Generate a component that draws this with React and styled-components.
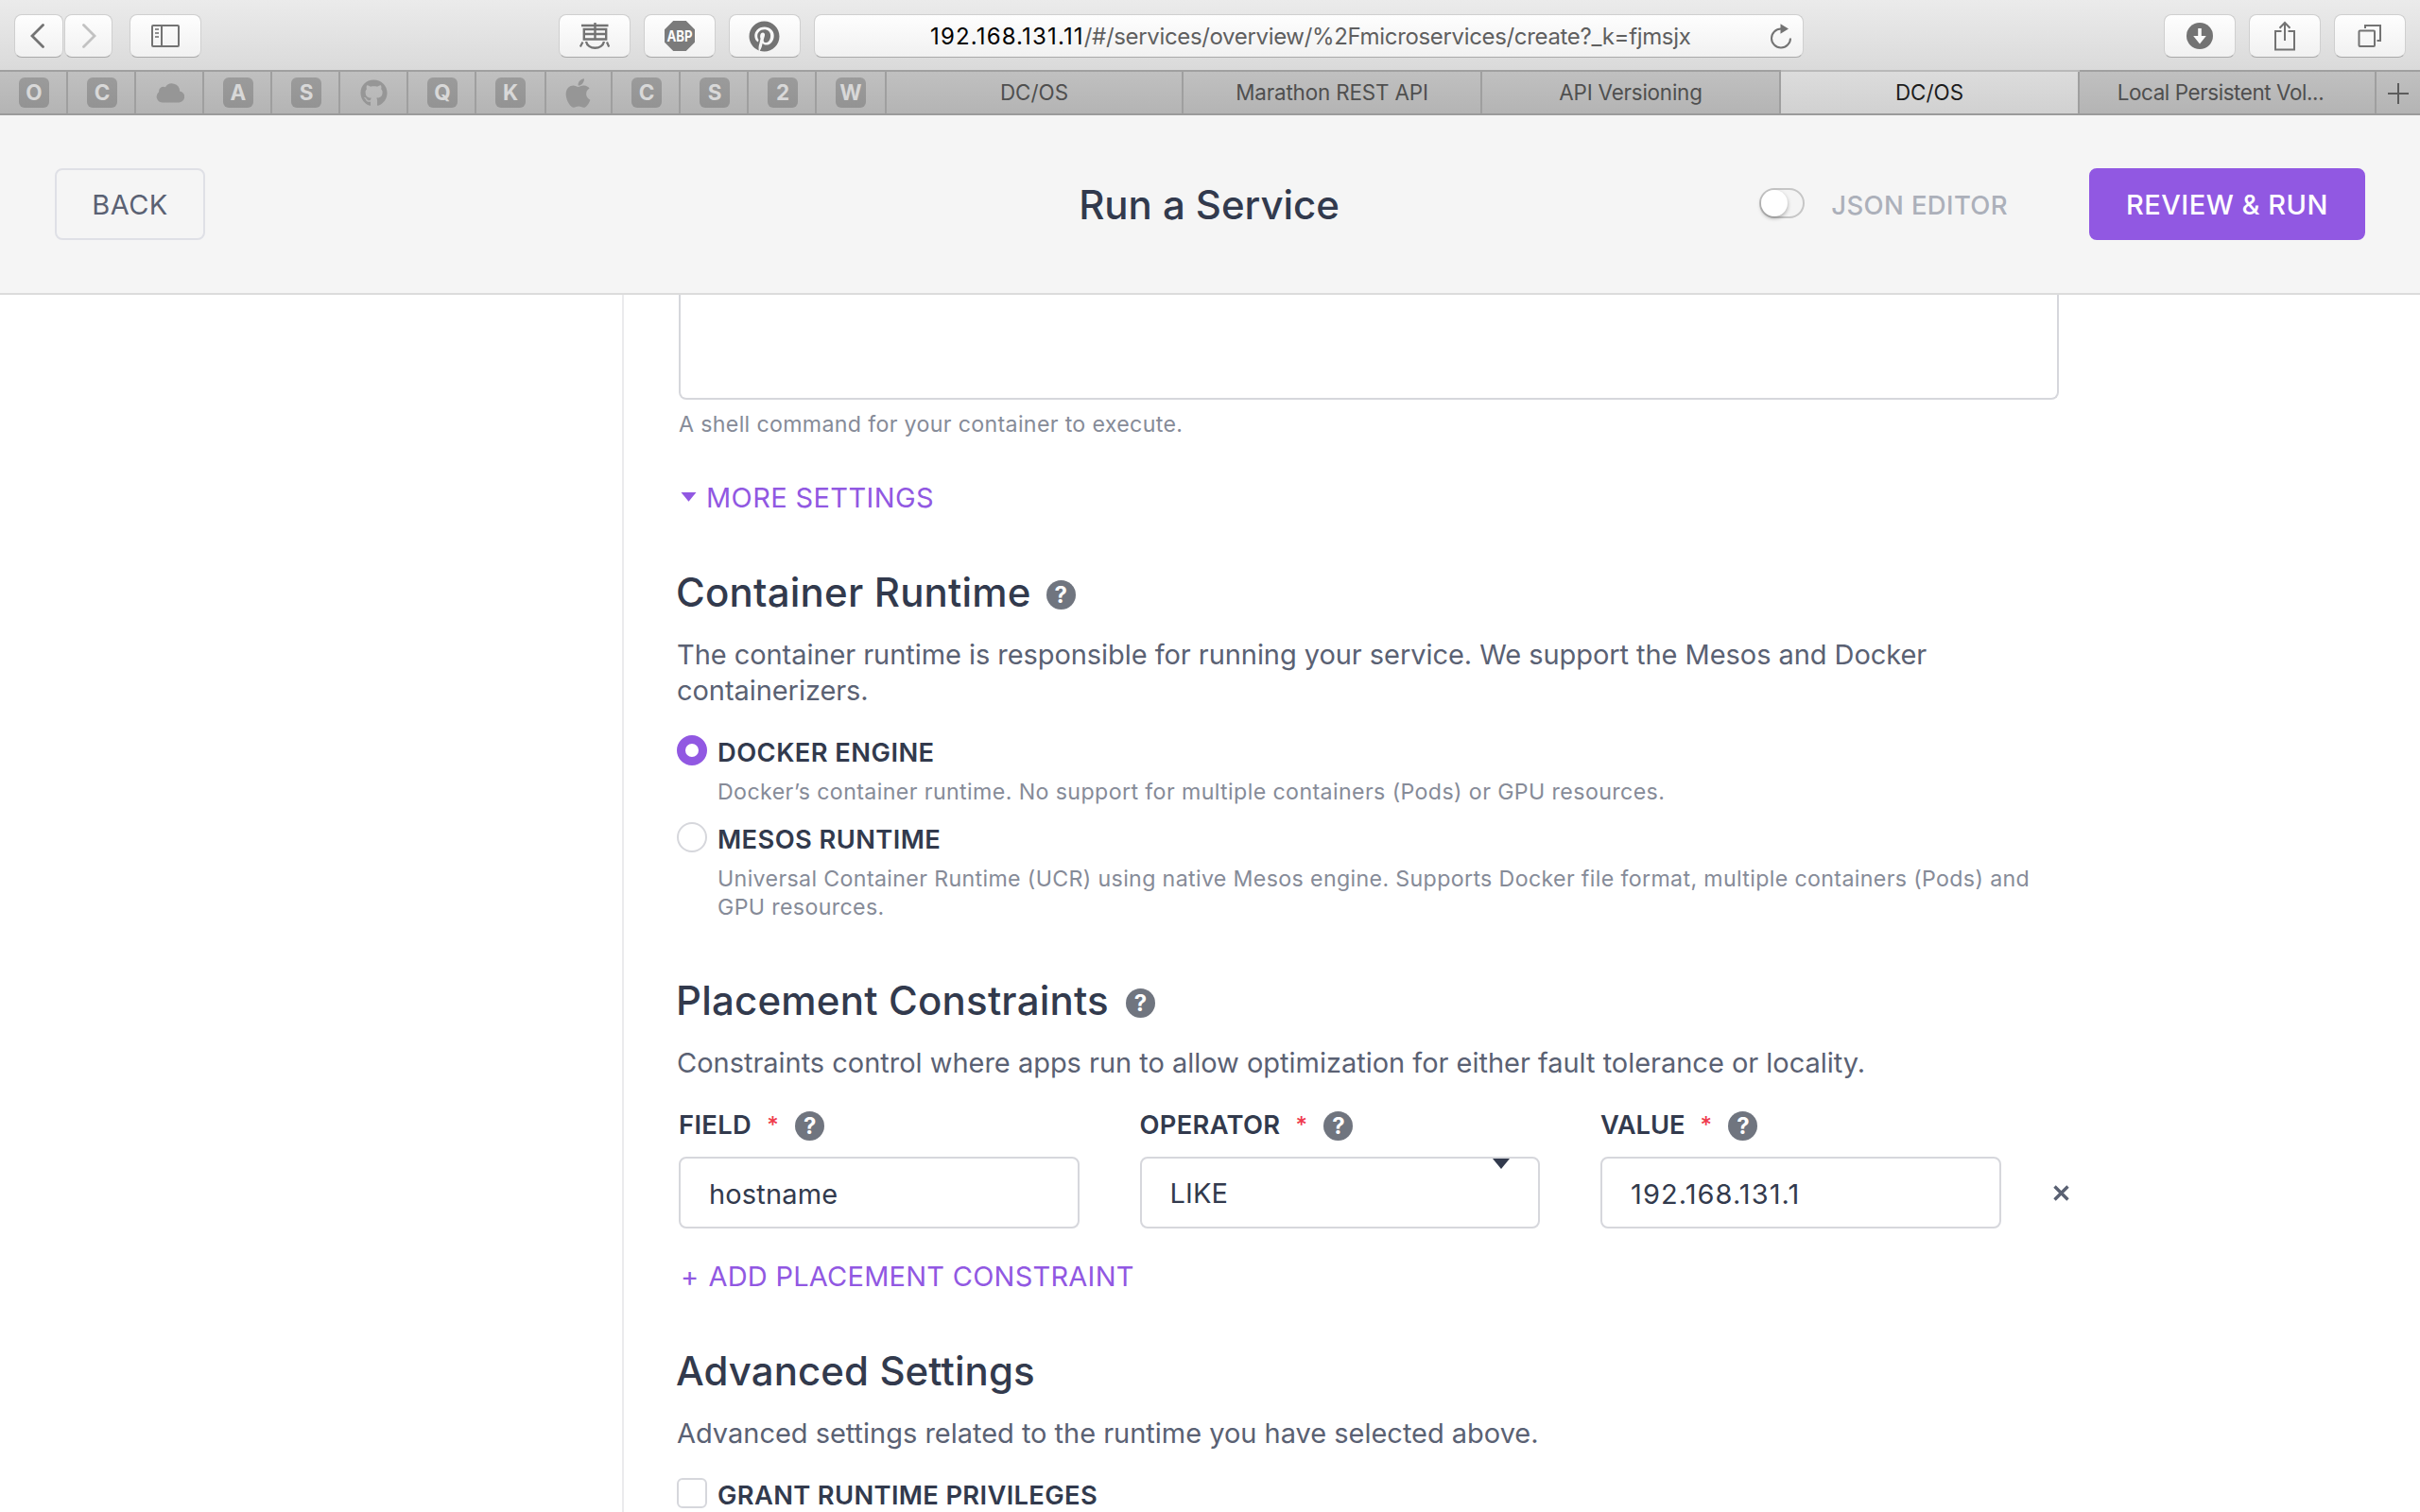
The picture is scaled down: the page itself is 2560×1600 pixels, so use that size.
import React from "react";
import styled, { createGlobalStyle } from "styled-components";
import { FaApple, FaGithub, FaPinterest } from "react-icons/fa";

const color = {
  ink: "#323a4d",
  body: "#5a6173",
  muted: "#868b98",
  purple: "#9158e2",
  border: "#d6d7dc",
  icon: "#737373",
  danger: "#ef3a4c",
};

const GlobalStyle = createGlobalStyle`
  * { box-sizing: border-box; }
  body {
    margin: 0;
    background: #fff;
    font-family: Inter, "Liberation Sans", sans-serif;
    overflow: hidden;
  }
`;

const Window = styled.div`
  display: flex;
  flex-direction: column;
  width: 2560px;
  height: 1600px;
  overflow: hidden;
`;

/* ---------- Browser toolbar ---------- */

const Toolbar = styled.div`
  flex: none;
  display: flex;
  align-items: flex-start;
  height: 74px;
  padding: 15px 15px 0;
  background: linear-gradient(#ebebeb, #dadada);
`;

const ToolGroup = styled.div`
  display: flex;
  gap: ${(p) => p.$gap}px;
  margin-right: ${(p) => p.$after || 0}px;
`;

const ToolButton = styled.div`
  display: flex;
  align-items: center;
  justify-content: center;
  width: ${(p) => p.$width || 76}px;
  height: 46px;
  padding-right: ${(p) => p.$nudge || 0}px;
  border: 1px solid #cfcfcf;
  border-bottom-color: #a9a9a9;
  border-radius: 8px;
  background: linear-gradient(#fefefe, #f1f1f1);
  color: ${color.icon};
`;

const AddressBar = styled.div`
  display: flex;
  align-items: center;
  width: 1048px;
  height: 46px;
  margin-right: 381px;
  padding: 2px 11px 0 122px;
  border: 1px solid #cfcfcf;
  border-bottom-color: #a9a9a9;
  border-radius: 8px;
  background: linear-gradient(#fefefe, #f1f1f1);
  color: ${color.icon};
  font-size: 24px;
  line-height: 30px;
  white-space: pre;
`;

const Host = styled.span`
  color: #000;
  letter-spacing: 1.15px;
`;

const Path = styled.span`
  flex: 1;
  color: #5f5f5f;
  letter-spacing: -0.34px;
`;

const AbpWord = styled.span`
  position: absolute;
  inset: 0;
  display: flex;
  align-items: center;
  justify-content: center;
  color: #fbfbfb;
  font-size: 16.5px;
  font-weight: 700;
  transform: scaleX(0.8);
`;

const AbpBadge = styled.span`
  position: relative;
  width: 32px;
  height: 32px;
  background: #7b7b7b;
  clip-path: polygon(29% 0, 71% 0, 100% 29%, 100% 71%, 71% 100%, 29% 100%, 0 71%, 0 29%);
`;

/* ---------- Tab strip ---------- */

const TabStrip = styled.div`
  flex: none;
  display: flex;
  height: 48px;
  border-top: 2px solid #a0a0a0;
  border-bottom: 2px solid #9b9b9b;
  background: linear-gradient(#c0c0c0, #b4b4b4);
`;

const PinnedTab = styled.div`
  display: flex;
  align-items: center;
  width: ${(p) => p.$width || 72}px;
  padding-left: ${(p) => p.$inset || 20}px;
  border-right: 2px solid #9f9f9f;
  color: #969696;
`;

const Monogram = styled.span`
  display: flex;
  align-items: center;
  justify-content: center;
  width: 32px;
  height: 32px;
  border-radius: 6px;
  background: linear-gradient(#9b9b9b, #939393);
  color: #d8d8d8;
  font-size: 22.5px;
  font-weight: 700;
  line-height: 32px;
`;

const Tab = styled.div`
  display: flex;
  align-items: center;
  justify-content: center;
  width: ${(p) => p.$width || 316}px;
  padding-right: ${(p) => p.$tail || 0}px;
  border-right: 2px solid #9f9f9f;
  background: ${(p) => (p.$active ? "linear-gradient(#dcdcdc, #d1d1d1)" : "none")};
  box-shadow: ${(p) => (p.$active ? "0 -2px 0 #b9b9b9" : "none")};
  color: ${(p) => (p.$active ? "#1c1c1c" : "#4f4f4f")};
  font-size: 22.4px;
  line-height: 28px;
  letter-spacing: ${(p) => p.$track || 0}px;
  white-space: nowrap;
`;

const NewTab = styled.div`
  flex: 1;
  display: flex;
  align-items: center;
  justify-content: center;
  padding-top: 2px;
`;

/* ---------- Page header ---------- */

const PageHeader = styled.header`
  flex: none;
  display: grid;
  grid-template-columns: 1fr auto 1fr;
  align-items: center;
  height: 190px;
  padding: 0 58px;
  border-bottom: 2px solid #dcdcdc;
  background: #f5f5f5;
`;

const Button = styled.button`
  width: ${(p) => p.$width}px;
  height: 76px;
  padding: 2px 0 0;
  border: 2px solid ${(p) => (p.$primary ? color.purple : "#dfe0e6")};
  border-radius: 8px;
  background: ${(p) => (p.$primary ? color.purple : "transparent")};
  color: ${(p) => (p.$primary ? "#fff" : color.body)};
  font: ${(p) => (p.$primary ? 500 : 400)} 29px/38px Inter, sans-serif;
  letter-spacing: 0.5px;
`;

const PageTitle = styled.h1`
  margin: 0;
  padding: 2px 2px 0 0;
  color: ${color.ink};
  font-size: 42px;
  font-weight: 500;
  line-height: 50px;
  letter-spacing: -0.05px;
`;

const HeaderActions = styled.div`
  display: flex;
  align-items: center;
  justify-content: flex-end;
`;

const Toggle = styled.span`
  width: 48px;
  height: 32px;
  margin: 0 28px 2px 0;
  border: 2px solid #c6c6c6;
  border-radius: 16px;
  background: #f4f4f4;

  &::before {
    content: "";
    display: block;
    width: 28px;
    height: 28px;
    border-radius: 50%;
    background: #fff;
    box-shadow: 0 2px 4px rgba(0, 0, 0, 0.3);
  }
`;

const ToggleLabel = styled.span`
  margin: 2px 86px 0 0;
  color: #acb0ba;
  font-size: 27.5px;
  font-weight: 500;
  line-height: 34px;
  letter-spacing: 0.36px;
`;

/* ---------- Form ---------- */

const Main = styled.main`
  flex: 1;
  display: flex;
  min-height: 0;
  overflow: hidden;
`;

const Sidebar = styled.aside`
  flex: none;
  width: 660px;
  border-right: 2px solid #ebebed;
`;

const Form = styled.section`
  width: 1518px;
  padding-left: 56px;
`;

const CommandArea = styled.div`
  height: 111px;
  margin-left: 2px;
  border: 2px solid ${color.border};
  border-top: 0;
  border-radius: 0 0 8px 8px;
`;

const Hint = styled.p`
  margin: ${(p) => p.$top || 9}px 0 0 ${(p) => p.$indent || 0}px;
  color: ${color.muted};
  font-size: 23.2px;
  line-height: 30px;
  letter-spacing: ${(p) => p.$track || 0.35}px;
`;

const TextLink = styled.div`
  display: flex;
  align-items: center;
  gap: ${(p) => p.$gap}px;
  margin: ${(p) => p.$top}px 0 0 4px;
  color: ${color.purple};
  font-size: 29px;
  line-height: 38px;
  letter-spacing: ${(p) => p.$track}px;
`;

const LinkCaret = styled.svg`
  margin-bottom: 2px;
`;

const Heading = styled.h2`
  display: flex;
  align-items: center;
  gap: ${(p) => p.$gap || 16}px;
  margin: ${(p) => p.$top || 56}px 0 0 -1px;
  color: ${color.ink};
  font-size: 42px;
  font-weight: 500;
  line-height: 50px;
  letter-spacing: ${(p) => p.$track || 0.2}px;
`;

const Paragraph = styled.p`
  margin: 22px 0 0;
  color: ${color.body};
  font-size: 29px;
  line-height: 38px;
  letter-spacing: ${(p) => p.$track || -0.02}px;
`;

const HelpBadge = styled.span`
  display: flex;
  align-items: center;
  justify-content: center;
  width: 31px;
  height: 31px;
  margin-top: ${(p) => p.$drop}px;
  border-radius: 50%;
  background: #70757f;
  color: #fff;
  font-size: 24px;
  font-weight: 700;
  line-height: 31px;
  letter-spacing: 0;
`;

const Option = styled.div`
  display: flex;
  align-items: flex-start;
  gap: 11px;
  margin-top: ${(p) => p.$top}px;
`;

const OptionBody = styled.div`
  flex: 1;
  padding-top: 2px;
`;

const Radio = styled.span`
  flex: none;
  width: 32px;
  height: 32px;
  border: ${(p) => (p.$checked ? `9px solid ${color.purple}` : `2px solid ${color.border}`)};
  border-radius: 50%;
  background: #fff;
`;

const Checkbox = styled.span`
  flex: none;
  width: 32px;
  height: 32px;
  border: 2px solid ${color.border};
  border-radius: 6px;
`;

const Label = styled.div`
  display: flex;
  align-items: center;
  color: ${color.ink};
  font-size: 27.3px;
  font-weight: 600;
  line-height: 34px;
  letter-spacing: ${(p) => p.$track || 0.35}px;
`;

const Star = styled.span`
  width: 13px;
  margin: 0 17px 0 16px;
  color: ${color.danger};
  font-size: 24px;
  font-weight: 500;
`;

const FieldGrid = styled.div`
  display: grid;
  grid-template-columns: repeat(3, 423.5px) auto;
  column-gap: 64px;
  align-items: end;
  justify-content: start;
  margin: 30px 0 0 2px;
`;

const Field = styled.div`
  display: flex;
  flex-direction: column;
  gap: 16px;
`;

const Control = styled.div`
  display: flex;
  justify-content: space-between;
  height: 76px;
  padding: ${(p) => p.$pad || 19}px 30px 0;
  border: 2px solid ${color.border};
  border-radius: 8px;
  color: ${color.ink};
  font-size: 29px;
  line-height: 38px;
  letter-spacing: ${(p) => p.$track || 0}px;
`;

const SelectCaret = styled.svg`
  margin-top: -18px;
`;

const RemoveButton = styled.span`
  display: flex;
  align-items: center;
  height: 76px;
  margin-left: -9px;
`;

const Cloud = () => (
  <svg width="30" height="21" viewBox="0 0 30 21">
    <path
      fill="currentColor"
      d="M6.6 20.4A6.2 6.2 0 0 1 3.2 9.2 4.6 4.6 0 0 1 9.9 4.3 8.2 8.2 0 0 1 25.1 8.5 6 6 0 0 1 23.6 20.4Z"
    />
  </svg>
);

const pinned = [
  { mark: "O" },
  { mark: "C" },
  { icon: <Cloud />, inset: 21 },
  { mark: "A" },
  { mark: "S" },
  { icon: <FaGithub size={29} />, inset: 21 },
  { mark: "Q" },
  { mark: "K", width: 74 },
  { icon: <FaApple size={35} />, width: 70, inset: 16 },
  { mark: "C" },
  { mark: "S" },
  { mark: "2" },
  { mark: "W", width: 74 },
];

const tabs = [
  { title: "DC/OS", width: 314 },
  { title: "Marathon REST API", track: -0.15 },
  { title: "API Versioning", track: -0.2 },
  { title: "DC/OS", active: true },
  { title: "Local Persistent Vol...", width: 314, track: -0.4, tail: 14 },
];

const stroke = { fill: "none", stroke: "currentColor" };

const Help = ({ drop = 1 }) => <HelpBadge $drop={drop}>?</HelpBadge>;

const FieldLabel = ({ children, track }) => (
  <Label $track={track}>
    {children}
    <Star>*</Star>
    <Help />
  </Label>
);

function BrowserToolbar() {
  return (
    <Toolbar>
      <ToolGroup $gap={1} $after={18}>
        <ToolButton $width={52} $nudge={3}>
          <svg width="16" height="26" viewBox="0 0 16 26" {...stroke} strokeWidth="2.8">
            <path d="M13.5 1.5 2 13l11.5 11.5" strokeLinecap="round" />
          </svg>
        </ToolButton>
        <ToolButton $width={51}>
          <svg width="16" height="26" viewBox="0 0 16 26" fill="none" stroke="#c2c2c2" strokeWidth="2.8">
            <path d="M2.5 1.5 14 13 2.5 24.5" strokeLinecap="round" />
          </svg>
        </ToolButton>
      </ToolGroup>
      <ToolGroup $after={378}>
        <ToolButton>
          <svg width="30" height="24" viewBox="0 0 30 24" {...stroke} strokeWidth="2">
            <rect x="1" y="1" width="28" height="22" rx="1" />
            <path d="M11 1v22" />
            <path d="M4 5h4M4 9h4M4 13h4" stroke="#8f8f8f" />
          </svg>
        </ToolButton>
      </ToolGroup>
      <ToolGroup $gap={14} $after={14}>
        <ToolButton>
          <svg width="32" height="30" viewBox="0 0 32 30" {...stroke} strokeWidth="2.4">
            <path d="M2 4h28.5M16.5 1v17M4.8 8h23.4v10.5H4.8zM5 13h23" />
            <path d="M7 21c2 9 17 9 19 0" />
            <path d="M3.5 21.5.8 26.5M29 21.5l2.2 5" strokeWidth="2.2" />
          </svg>
        </ToolButton>
        <ToolButton>
          <AbpBadge>
            <AbpWord>ABP</AbpWord>
          </AbpBadge>
        </ToolButton>
        <ToolButton $nudge={1}>
          <FaPinterest size={33} />
        </ToolButton>
      </ToolGroup>
      <AddressBar>
        <Host>192.168.131.11</Host>
        <Path>/#/services/overview/%2Fmicroservices/create?_k=fjmsjx</Path>
        <svg width="24" height="28" viewBox="0 0 24 28" {...stroke} strokeWidth="2">
          <path d="M12 5.5A10 10 0 1 0 22 15.5" />
          <path d="M11.5.2v10.6L20 5.6z" fill="currentColor" stroke="none" />
        </svg>
      </AddressBar>
      <ToolGroup $gap={14}>
        <ToolButton>
          <svg width="28" height="28" viewBox="0 0 28 28">
            <circle cx="14" cy="14" r="14" fill="currentColor" />
            <path d="M12.2 6h3.6v8h5L14 22.5 7.2 14h5z" fill="#fafafa" />
          </svg>
        </ToolButton>
        <ToolButton>
          <svg width="24" height="32" viewBox="0 0 24 32" {...stroke} strokeWidth="2">
            <path d="M8.5 11H2v19.5h20V11h-6.5M12 2v19M6.5 7.8 12 2l5.5 5.8" />
          </svg>
        </ToolButton>
        <ToolButton>
          <svg width="26" height="26" viewBox="0 0 26 26" {...stroke} strokeWidth="2">
            <rect x="1.5" y="7.5" width="16.5" height="16.5" rx="1" />
            <path d="M8 5V2h16v16h-3.5" />
          </svg>
        </ToolButton>
      </ToolGroup>
    </Toolbar>
  );
}

function BrowserTabs() {
  return (
    <TabStrip>
      {pinned.map((p, i) => (
        <PinnedTab key={i} $width={p.width} $inset={p.inset}>
          {p.icon || <Monogram>{p.mark}</Monogram>}
        </PinnedTab>
      ))}
      {tabs.map((t, i) => (
        <Tab key={i} $width={t.width} $active={t.active} $track={t.track} $tail={t.tail}>
          {t.title}
        </Tab>
      ))}
      <NewTab>
        <svg width="22" height="22" viewBox="0 0 22 22" fill="none" stroke="#5c5c5c" strokeWidth="2">
          <path d="M11 0v22M0 11h22" />
        </svg>
      </NewTab>
    </TabStrip>
  );
}

export default function App() {
  return (
    <Window>
      <GlobalStyle />
      <BrowserToolbar />
      <BrowserTabs />
      <PageHeader>
        <Button $width={159}>BACK</Button>
        <PageTitle>Run a Service</PageTitle>
        <HeaderActions>
          <Toggle />
          <ToggleLabel>JSON EDITOR</ToggleLabel>
          <Button $width={292} $primary>
            REVIEW &amp; RUN
          </Button>
        </HeaderActions>
      </PageHeader>
      <Main>
        <Sidebar />
        <Form>
          <CommandArea />
          <Hint $top={11} $indent={2} $track={0.33}>
            A shell command for your container to execute.
          </Hint>
          <TextLink $top={44} $gap={10} $track={0.38}>
            <LinkCaret width="17" height="10" viewBox="0 0 17 10">
              <path d="M.5 0h16l-8 9.8z" fill="currentColor" />
            </LinkCaret>
            MORE SETTINGS
          </TextLink>

          <Heading>
            Container Runtime
            <Help drop={5} />
          </Heading>
          <Paragraph $track={-0.058}>
            The container runtime is responsible for running your service. We support the Mesos and
            Docker containerizers.
          </Paragraph>
          <Option $top={28}>
            <Radio $checked />
            <OptionBody>
              <Label $track={0.45}>DOCKER ENGINE</Label>
              <Hint $track={0.39}>
                Docker’s container runtime. No support for multiple containers (Pods) or GPU
                resources.
              </Hint>
            </OptionBody>
          </Option>
          <Option $top={17}>
            <Radio />
            <OptionBody>
              <Label $track={0.4}>MESOS RUNTIME</Label>
              <Hint>
                Universal Container Runtime (UCR) using native Mesos engine. Supports Docker file
                format, multiple containers (Pods) and GPU resources.
              </Hint>
            </OptionBody>
          </Option>

          <Heading $top={59} $gap={18}>
            Placement Constraints
            <Help drop={5} />
          </Heading>
          <Paragraph>
            Constraints control where apps run to allow optimization for either fault tolerance or
            locality.
          </Paragraph>
          <FieldGrid>
            <Field>
              <FieldLabel track={0.38}>FIELD</FieldLabel>
              <Control $track={0.15}>hostname</Control>
            </Field>
            <Field>
              <FieldLabel track={0.32}>OPERATOR</FieldLabel>
              <Control $pad={18} $track={0.1}>
                LIKE
                <SelectCaret width="18" height="11" viewBox="0 0 18 11">
                  <path d="M0 0h18L9 11z" fill={color.ink} />
                </SelectCaret>
              </Control>
            </Field>
            <Field>
              <FieldLabel track={-0.05}>VALUE</FieldLabel>
              <Control $track={1.08}>192.168.131.1</Control>
            </Field>
            <RemoveButton>
              <svg width="17" height="17" viewBox="0 0 17 17" fill="none" stroke={color.body} strokeWidth="3.4">
                <path d="M1.5 1.500l14 14M15.500 1.500l-14 14" />
              </svg>
            </RemoveButton>
          </FieldGrid>
          <TextLink $top={32} $gap={10} $track={0.24}>
            <span>+</span>
            <span>ADD PLACEMENT CONSTRAINT</span>
          </TextLink>

          <Heading $track={0.07}>Advanced Settings</Heading>
          <Paragraph>Advanced settings related to the runtime you have selected above.</Paragraph>
          <Option $top={28}>
            <Checkbox />
            <OptionBody>
              <Label>GRANT RUNTIME PRIVILEGES</Label>
            </OptionBody>
          </Option>
        </Form>
      </Main>
    </Window>
  );
}
